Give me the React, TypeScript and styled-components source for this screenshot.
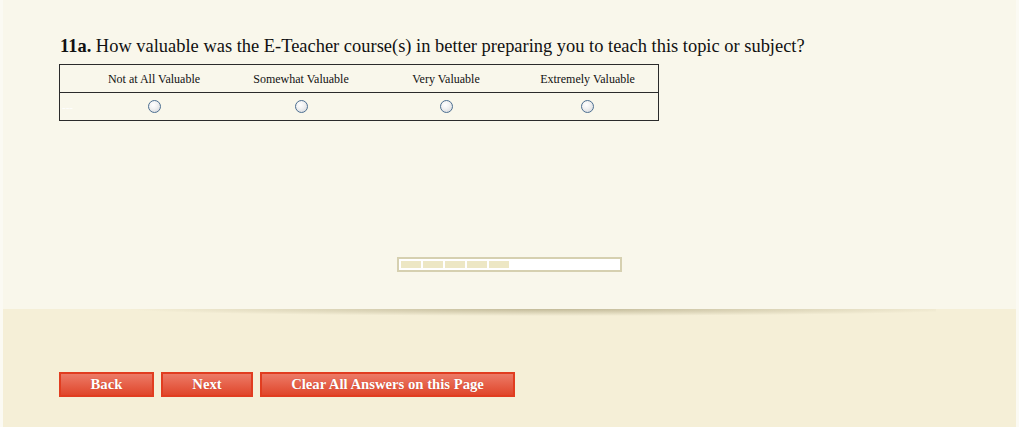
import React from 'react';
import styled, { createGlobalStyle } from 'styled-components';

const GlobalStyle = createGlobalStyle`
  html, body {
    margin: 0;
    padding: 0;
    background: #fbfaf3;
  }
  body {
    font-family: "Liberation Serif", "Times New Roman", serif;
  }
`;

const Page = styled.div`
  margin: 0 3px;
  height: 427px;
  display: flex;
  flex-direction: column;
  background: #f5efd7;
`;

const QuestionPanel = styled.div`
  position: relative;
  height: 309px;
  box-sizing: border-box;
  padding: 35px 0 0 57px;
  background: #f9f7eb;
  &::after {
    content: '';
    position: absolute;
    left: 80px;
    right: 80px;
    top: 100%;
    height: 7px;
    background: radial-gradient(ellipse 50% 100% at 55% 0%, rgba(160, 150, 110, 0.6), rgba(160, 150, 110, 0) 100%);
  }
`;

const Question = styled.div`
  font-size: 18.45px;
  color: #111;
  line-height: 22px;
  b {
    font-weight: bold;
  }
`;

const Grid = styled.table`
  margin: 7px 0 0 -1px;
  border-collapse: collapse;
  border: 1px solid #2b2b2b;
  width: 599px;
  table-layout: fixed;
  font-size: 12px;
  color: #111;
`;

const HeadCell = styled.th<{ $w: number }>`
  width: ${(p) => p.$w}px;
  height: 26px;
  padding: 1px 0 0;
  font-weight: normal;
  text-align: center;
  vertical-align: middle;
  border-bottom: 1px solid #2b2b2b;
`;

const Cell = styled.td`
  height: 27px;
  padding: 0;
  text-align: center;
`;

const RowLabel = styled.td`
  padding: 0 0 0 2px;
  color: #ffffff;
  font-size: 11px;
`;

const Radio = styled.span`
  display: inline-block;
  width: 11px;
  height: 11px;
  margin-top: 3px;
  border-radius: 50%;
  border: 1px solid #4d6f91;
  background: radial-gradient(circle at 40% 35%, #ffffff 0%, #f2f2f2 40%, #cfd3d8 100%);
`;

const ProgressWrap = styled.div`
  display: flex;
  justify-content: center;
  margin-top: 136px;
  padding-right: 58px;
`;

const Progress = styled.div`
  width: 217px;
  height: 7px;
  border: 2px solid #d6d0b0;
  background: #ffffff;
  display: flex;
  gap: 2px;
  padding: 2px;
`;

const Segment = styled.div`
  width: 20px;
  height: 7px;
  background: #ede7c4;
`;

const Footer = styled.div`
  display: flex;
  gap: 7px;
  padding: 63px 0 0 56px;
`;

const Button = styled.button<{ $w: number }>`
  width: ${(p) => p.$w}px;
  height: 25px;
  padding: 0;
  border: 2px solid #e13d20;
  background: linear-gradient(#ec7b67, #e0462b);
  color: #ffffff;
  font-family: "Liberation Serif", "Times New Roman", serif;
  font-weight: bold;
  font-size: 14.7px;
  text-shadow: 0 0 1px rgba(120, 20, 0, 0.4);
  cursor: pointer;
`;

const options = [
  { label: 'Not at All Valuable', w: 146 },
  { label: 'Somewhat Valuable', w: 148 },
  { label: 'Very Valuable', w: 142 },
  { label: 'Extremely Valuable', w: 141 },
];

export default function App() {
  return (
    <>
      <GlobalStyle />
      <Page>
        <QuestionPanel>
          <Question>
            <b>11a.</b> How valuable was the E-Teacher course(s) in better preparing you to teach this topic or subject?
          </Question>
          <Grid>
            <thead>
              <tr>
                <HeadCell $w={21} />
                {options.map((o) => (
                  <HeadCell key={o.label} $w={o.w}>{o.label}</HeadCell>
                ))}
              </tr>
            </thead>
            <tbody>
              <tr>
                <RowLabel>---</RowLabel>
                {options.map((o) => (
                  <Cell key={o.label}><Radio /></Cell>
                ))}
              </tr>
            </tbody>
          </Grid>
          <ProgressWrap>
            <Progress>
              {[0, 1, 2, 3, 4].map((i) => <Segment key={i} />)}
            </Progress>
          </ProgressWrap>
        </QuestionPanel>
        <Footer>
          <Button $w={95}>Back</Button>
          <Button $w={92}>Next</Button>
          <Button $w={255}>Clear All Answers on this Page</Button>
        </Footer>
      </Page>
    </>
  );
}
